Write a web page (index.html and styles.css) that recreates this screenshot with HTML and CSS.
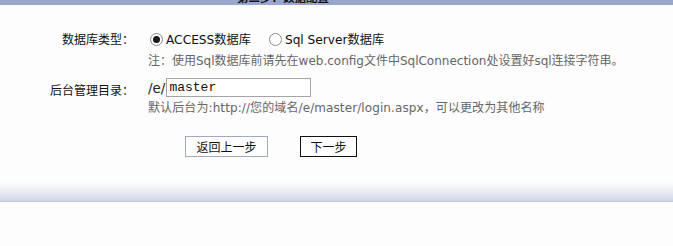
FILE: index.html
```html
<!DOCTYPE html>
<html lang="zh-CN">
<head>
<meta charset="utf-8">
<title>数据库配置</title>
<link rel="stylesheet" href="styles.css">
</head>
<body>
<div class="topbar"><span class="title">第二步：数据配置</span></div>
<div class="form">
  <div class="row row-db">
    <div class="label">数据库类型：</div>
    <div class="field">
      <div class="radios">
        <label class="radio"><span class="dot checked"></span>ACCESS数据库</label>
        <label class="radio"><span class="dot"></span>Sql Server数据库</label>
      </div>
      <div class="note">注：使用Sql数据库前请先在web.config文件中SqlConnection处设置好sql连接字符串。</div>
    </div>
  </div>
  <div class="row row-dir">
    <div class="label">后台管理目录：</div>
    <div class="field">
      <div class="dirline"><span class="prefix">/e/</span><span class="input">master</span></div>
      <div class="note note2">默认后台为:http://您的域名/e/master/login.aspx，可以更改为其他名称</div>
    </div>
  </div>
  <div class="buttons">
    <span class="btn btn-back">返回上一步</span>
    <span class="btn btn-next">下一步</span>
  </div>
</div>
<div class="footer"></div>
</body>
</html>
```
FILE: styles.css
```css
html, body {
  margin: 0;
  padding: 0;
  background: #fdfdfd;
}
body {
  width: 673px;
  height: 246px;
  overflow: hidden;
  font-family: "DejaVu Sans", "Noto Sans CJK SC", sans-serif;
  font-size: 12px;
  color: #111;
}
.topbar {
  height: 5px;
  background: #97a8cc;
  overflow: hidden;
}
.title {
  display: block;
  margin-left: 237px;
  margin-top: -9px;
  font-size: 11.5px;
  line-height: 12px;
  font-weight: bold;
  color: #111;
  font-family: "Noto Sans CJK SC", sans-serif;
}
.form {
  padding-top: 24px;
}
.row {
  display: grid;
  grid-template-columns: 140px 1fr;
  column-gap: 8px;
}
.label {
  text-align: right;
  padding-right: 6px;
  font-family: "Noto Sans CJK SC", sans-serif;
  font-size: 12px;
  line-height: 20px;
  color: #111;
}
.row-dir {
  margin-top: 10px;
}
.row-dir .label {
  padding-top: 2px;
  align-self: start;
}
.radios {
  display: flex;
  gap: 18px;
  height: 20px;
  align-items: center;
}
.radio {
  display: flex;
  align-items: center;
  gap: 3px;
  font-size: 12.2px;
  color: #111;
}
.radio:first-child {
  margin-left: 2px;
}
.dot {
  width: 11px;
  height: 11px;
  border: 1px solid #8a8a8a;
  border-radius: 50%;
  background: #fff;
  display: flex;
  align-items: center;
  justify-content: center;
}
.dot.checked::after {
  content: "";
  width: 7px;
  height: 7px;
  border-radius: 50%;
  background: #1a1a1a;
}
.note {
  margin-top: 5px;
  color: #666;
  font-size: 12px;
  line-height: 14px;
}
.dirline {
  display: flex;
  align-items: center;
  height: 19px;
}
.prefix {
  font-size: 13.5px;
  color: #222;
  margin-right: 1px;
}
.input {
  box-sizing: border-box;
  width: 145px;
  height: 19px;
  border: 1px solid #a5a5a5;
  background: #fff;
  font-family: "Liberation Mono", monospace;
  font-size: 13px;
  line-height: 17px;
  padding-left: 2px;
  color: #111;
}
.note2 {
  margin-top: 4px;
  letter-spacing: 0.1px;
}
.buttons {
  display: flex;
  margin-top: 21px;
  padding-left: 185px;
  gap: 32px;
}
.btn {
  box-sizing: border-box;
  height: 21px;
  display: flex;
  align-items: center;
  justify-content: center;
  font-family: "Noto Sans CJK SC", sans-serif;
  font-size: 12px;
  background: #fff;
  color: #111;
}
.btn-back {
  width: 83px;
  border: 1px solid #a3a9bf;
}
.btn-next {
  width: 57px;
  border: 1px solid #111;
}
.footer {
  margin-top: 25px;
  height: 19px;
  background: linear-gradient(to bottom, #fdfdfd 0%, #f3f4f8 30%, #e3e6f1 65%, #d5dbeb 90%, #cbd2e5 100%);
  border-bottom: 1px solid #c4cde0;
}
```
